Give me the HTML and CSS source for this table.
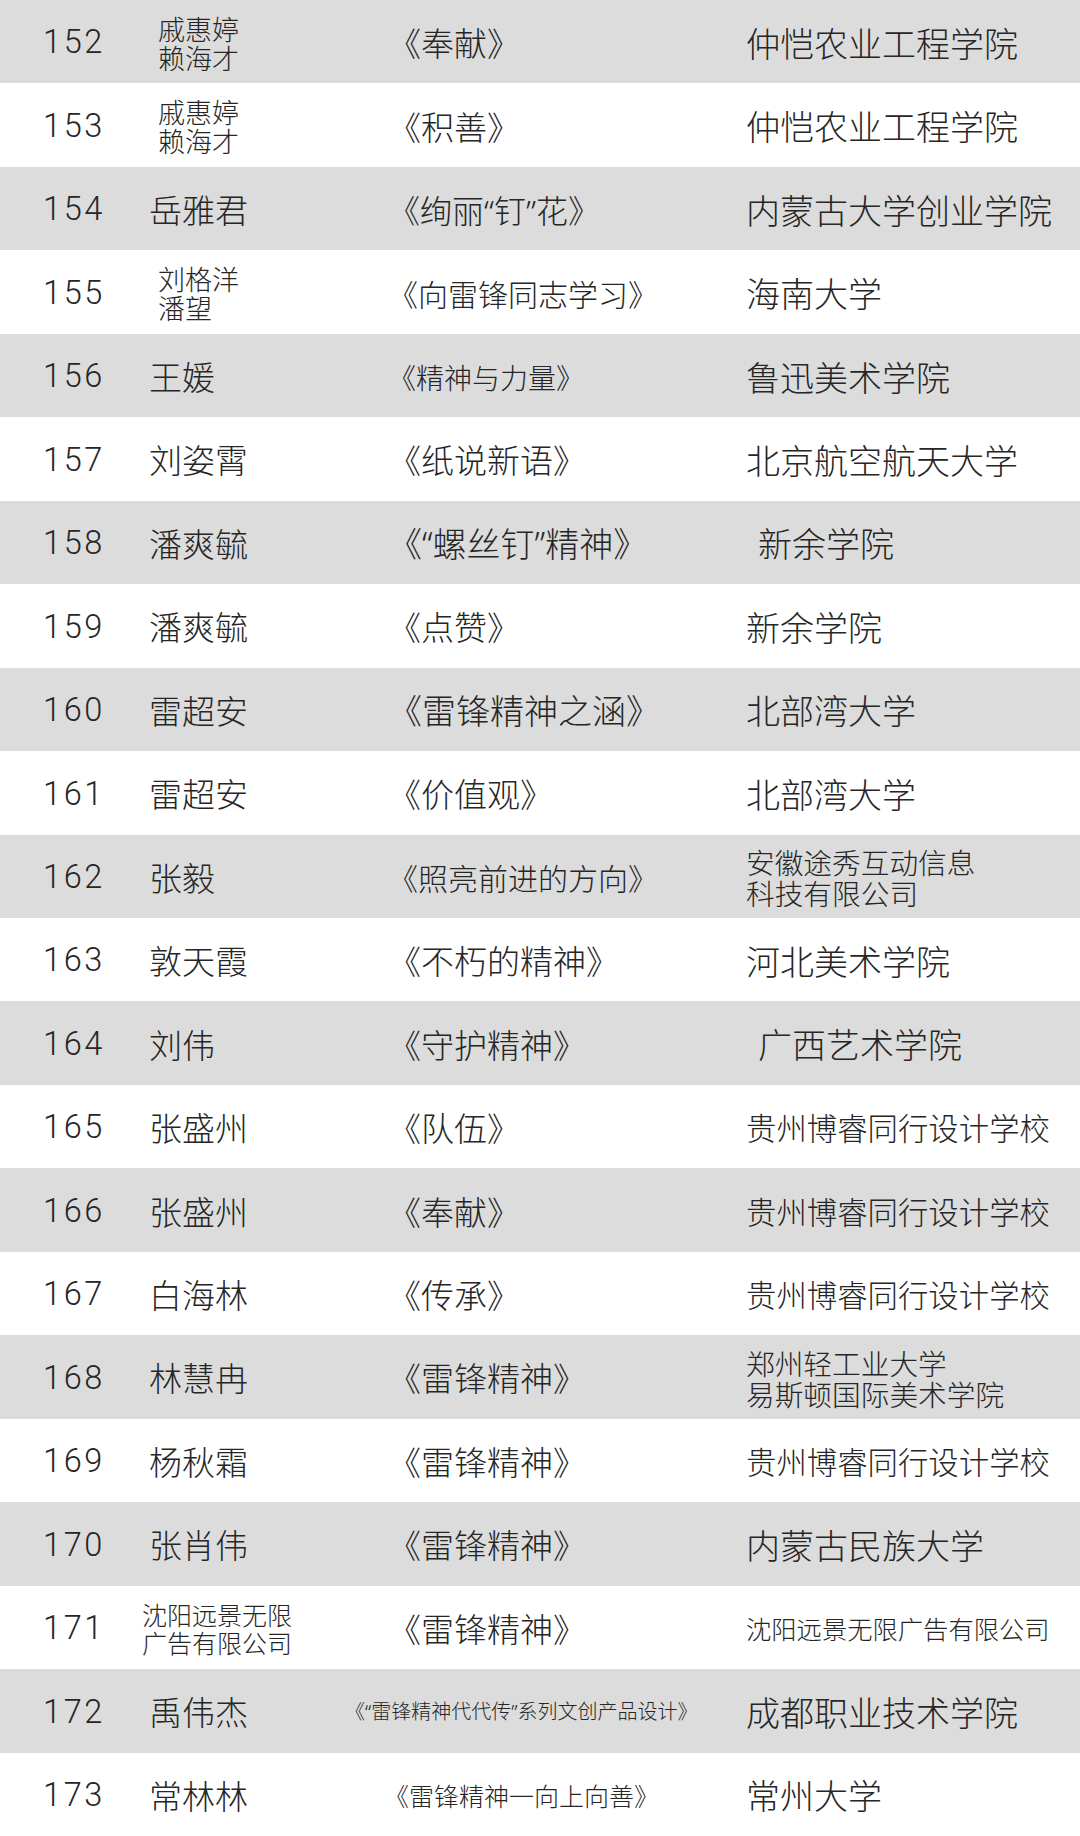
FILE: index.html
```html
<!DOCTYPE html>
<html lang="zh-CN">
<head>
<meta charset="utf-8">
<link rel="stylesheet" href="styles.css">
</head>
<body>
<div class="table">
  <div class="row"><div class="num">152</div><div class="name two">戚惠婷<br>赖海才</div><div class="title">《奉献》</div><div class="inst">仲恺农业工程学院</div></div>
  <div class="row"><div class="num">153</div><div class="name two">戚惠婷<br>赖海才</div><div class="title">《积善》</div><div class="inst">仲恺农业工程学院</div></div>
  <div class="row"><div class="num">154</div><div class="name">岳雅君</div><div class="title s32">《绚丽<span class="q">“</span>钉<span class="q">”</span>花》</div><div class="inst">内蒙古大学创业学院</div></div>
  <div class="row"><div class="num">155</div><div class="name two">刘格洋<br>潘望</div><div class="title s30">《向雷锋同志学习》</div><div class="inst">海南大学</div></div>
  <div class="row"><div class="num">156</div><div class="name">王媛</div><div class="title s28">《精神与力量》</div><div class="inst">鲁迅美术学院</div></div>
  <div class="row"><div class="num">157</div><div class="name">刘姿霄</div><div class="title">《纸说新语》</div><div class="inst">北京航空航天大学</div></div>
  <div class="row"><div class="num">158</div><div class="name">潘爽毓</div><div class="title s34">《<span class="q">“</span>螺丝钉<span class="q">”</span>精神》</div><div class="inst indent">新余学院</div></div>
  <div class="row"><div class="num">159</div><div class="name">潘爽毓</div><div class="title">《点赞》</div><div class="inst">新余学院</div></div>
  <div class="row"><div class="num">160</div><div class="name">雷超安</div><div class="title s34">《雷锋精神之涵》</div><div class="inst">北部湾大学</div></div>
  <div class="row"><div class="num">161</div><div class="name">雷超安</div><div class="title">《价值观》</div><div class="inst">北部湾大学</div></div>
  <div class="row"><div class="num">162</div><div class="name">张毅</div><div class="title s30">《照亮前进的方向》</div><div class="inst two">安徽途秀互动信息<br>科技有限公司</div></div>
  <div class="row"><div class="num">163</div><div class="name">敦天霞</div><div class="title">《不朽的精神》</div><div class="inst">河北美术学院</div></div>
  <div class="row"><div class="num">164</div><div class="name">刘伟</div><div class="title">《守护精神》</div><div class="inst indent">广西艺术学院</div></div>
  <div class="row"><div class="num">165</div><div class="name">张盛州</div><div class="title">《队伍》</div><div class="inst mid">贵州博睿同行设计学校</div></div>
  <div class="row"><div class="num">166</div><div class="name">张盛州</div><div class="title">《奉献》</div><div class="inst mid">贵州博睿同行设计学校</div></div>
  <div class="row"><div class="num">167</div><div class="name">白海林</div><div class="title">《传承》</div><div class="inst mid">贵州博睿同行设计学校</div></div>
  <div class="row"><div class="num">168</div><div class="name">林慧冉</div><div class="title">《雷锋精神》</div><div class="inst two">郑州轻工业大学<br>易斯顿国际美术学院</div></div>
  <div class="row"><div class="num">169</div><div class="name">杨秋霜</div><div class="title">《雷锋精神》</div><div class="inst mid">贵州博睿同行设计学校</div></div>
  <div class="row"><div class="num">170</div><div class="name">张肖伟</div><div class="title">《雷锋精神》</div><div class="inst">内蒙古民族大学</div></div>
  <div class="row"><div class="num">171</div><div class="name two long">沈阳远景无限<br>广告有限公司</div><div class="title">《雷锋精神》</div><div class="inst small">沈阳远景无限广告有限公司</div></div>
  <div class="row"><div class="num">172</div><div class="name">禹伟杰</div><div class="title tiny">《<span class="q">“</span>雷锋精神代代传<span class="q">”</span>系列文创产品设计》</div><div class="inst">成都职业技术学院</div></div>
  <div class="row"><div class="num">173</div><div class="name">常林林</div><div class="title smallish">《雷锋精神一向上向善》</div><div class="inst">常州大学</div></div>
</div>
</body>
</html>
```

FILE: styles.css
```css
* { box-sizing: border-box; }
html, body { margin: 0; padding: 0; background: #ffffff; }
body {
  width: 1080px;
  height: 1836px;
  overflow: hidden;
  font-family: "Noto Sans CJK SC", "Noto Sans", sans-serif;
  font-weight: 300;
  color: #262626;
}
.table { display: flex; flex-direction: column; }
.row {
  height: 83.4545px;
  display: grid;
  grid-template-columns: 106px 239px 358px 1fr;
  align-items: center;
  padding-left: 43px;
  padding-top: 2px;
  background: #ffffff;
}
.row:nth-child(odd) { background: #dcdcdc; }

.num {
  font-family: "Roboto", "Liberation Sans", sans-serif;
  font-weight: 300;
  font-size: 32.5px;
  letter-spacing: 2.6px;
  line-height: 1;
}
.name { font-size: 33px; line-height: 1; white-space: nowrap; }
.name.two { font-size: 27px; line-height: 29px; padding-left: 9px; }
.name.two.long { font-size: 25px; line-height: 28px; padding-left: 0; margin-left: -7px; }

.title { font-size: 33px; line-height: 1; white-space: nowrap; }
.title .q { font-family: "Noto Sans", "Liberation Sans", sans-serif; }
.title.s34 { font-size: 34px; }
.title.s32 { font-size: 32px; }
.title.s30 { font-size: 30px; }
.title.s28 { font-size: 28px; }
.title.tiny { font-size: 20px; margin-left: -43px; }
.title.smallish { font-size: 25px; margin-left: -4px; }

.inst { font-size: 34px; line-height: 1; white-space: nowrap; }
.inst.indent { padding-left: 12px; }
.inst.mid { font-size: 30.4px; }
.inst.small { font-size: 25.3px; }
.inst.two { font-size: 28.7px; line-height: 31px; }
```
